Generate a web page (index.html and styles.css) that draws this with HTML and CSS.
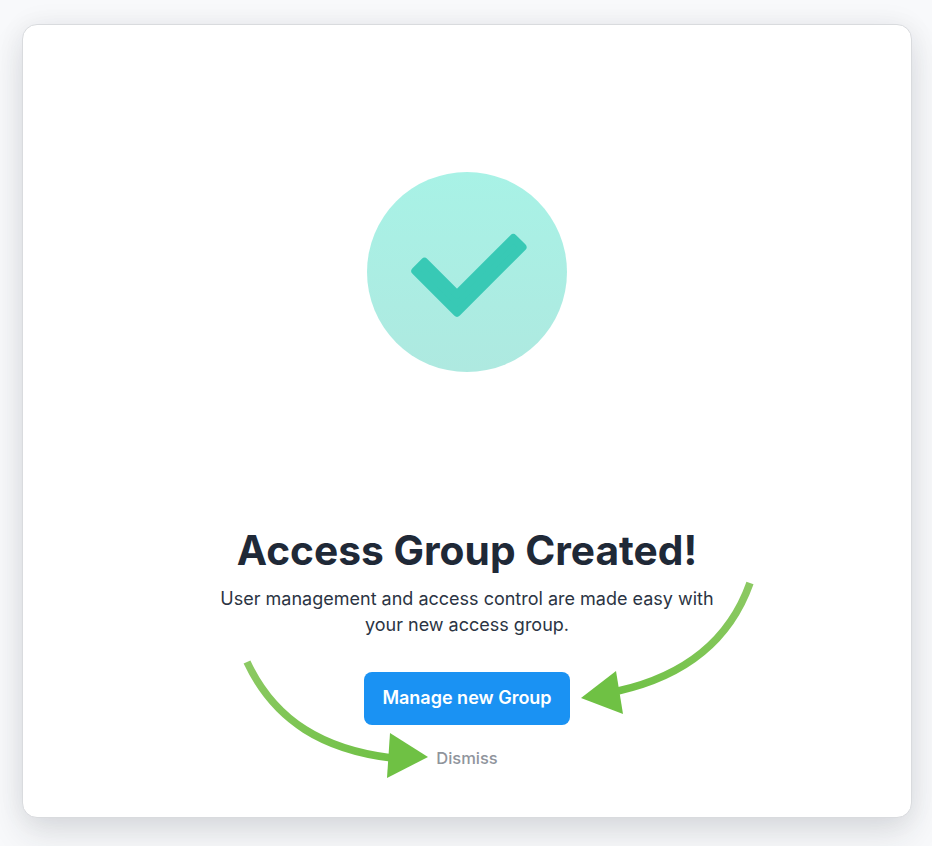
FILE: index.html
```html
<!DOCTYPE html>
<html lang="en">

<head>
    <meta charset="UTF-8">
    <meta name="viewport" content="width=device-width, initial-scale=1.0">
    <title>Access Group Created</title>
    <link rel="stylesheet" href="styles.css">
</head>

<body>
    <div class="card">
        <div class="badge">
            <svg width="200" height="200" viewBox="0 0 200 200">
                <path d="M57.5 89.8 L90 122.3 L146.3 66 L155.5 75.2 L90 140.7 L48.3 99 Z" fill="#38c9b5" stroke="#38c9b5" stroke-width="8" stroke-linejoin="round" />
            </svg>
        </div>
        <h1>Access Group Created!</h1>
        <p>User management and access control are made easy with your new access group.</p>
        <button type="button" class="primary">Manage new Group</button>
        <a class="dismiss">Dismiss</a>

        <!-- annotation arrows -->
        <svg class="arrows" width="888" height="792" viewBox="23 25 888 792">
            <defs>
                <linearGradient id="fade-left" x1="0" y1="0" x2="1" y2="1">
                    <stop offset="0" stop-color="#8cc963" />
                    <stop offset="1" stop-color="#70c146" />
                </linearGradient>
                <linearGradient id="fade-right" x1="1" y1="0" x2="0" y2="1">
                    <stop offset="0" stop-color="#8cc963" />
                    <stop offset="1" stop-color="#70c146" />
                </linearGradient>
            </defs>
            <path d="M247 662 C275 722 325 750 392 758" fill="none" stroke="url(#fade-left)" stroke-width="7.5" />
            <path d="M428 757 L390 733 L387 778 Z" fill="#6fc144" />
            <path d="M750 583 C728 645 680 677 618 691" fill="none" stroke="url(#fade-right)" stroke-width="7.5" />
            <path d="M581 698 L616 671 L623 714 Z" fill="#6fc144" />
        </svg>
    </div>
</body>

</html>
```

FILE: styles.css
```css
* {
    box-sizing: border-box;
}

body {
    margin: 0;
    height: 846px;
    padding: 24px 20px 28px 22px;
    background-color: #f8f9fb;
    font-family: Inter, "Liberation Sans", sans-serif;
    overflow: hidden;
}

.card {
    position: relative;
    width: 890px;
    height: 794px;
    padding-top: 147px;
    display: flex;
    flex-direction: column;
    align-items: center;
    background-color: #fff;
    border: 1px solid #d9dbde;
    border-radius: 15px;
    box-shadow: 0 0 28px rgba(30, 40, 50, 0.06), 0 16px 34px rgba(30, 40, 50, 0.12);
}

.badge {
    width: 200px;
    height: 200px;
    border-radius: 50%;
    background: linear-gradient(#a8f2e6, #aee9e0);
}

.badge svg {
    display: block;
}

h1 {
    margin: 153px 0 0;
    font-size: 40.7px;
    line-height: 52px;
    font-weight: 700;
    color: #1f2937;
}

p {
    width: 510px;
    margin: 9px 0 0;
    font-size: 18px;
    line-height: 26px;
    text-align: center;
    color: #2b3443;
}

.primary {
    width: 206px;
    height: 53px;
    margin-top: 34px;
    padding-bottom: 4px;
    border: 0;
    border-radius: 8px;
    background-color: #1a92f3;
    color: #fff;
    font-family: inherit;
    font-size: 18px;
    font-weight: 600;
}

.dismiss {
    margin-top: 23px;
    font-size: 16.5px;
    line-height: 20px;
    font-weight: 500;
    color: #8f949c;
}

.arrows {
    position: absolute;
    left: 0;
    top: 0;
}
```
